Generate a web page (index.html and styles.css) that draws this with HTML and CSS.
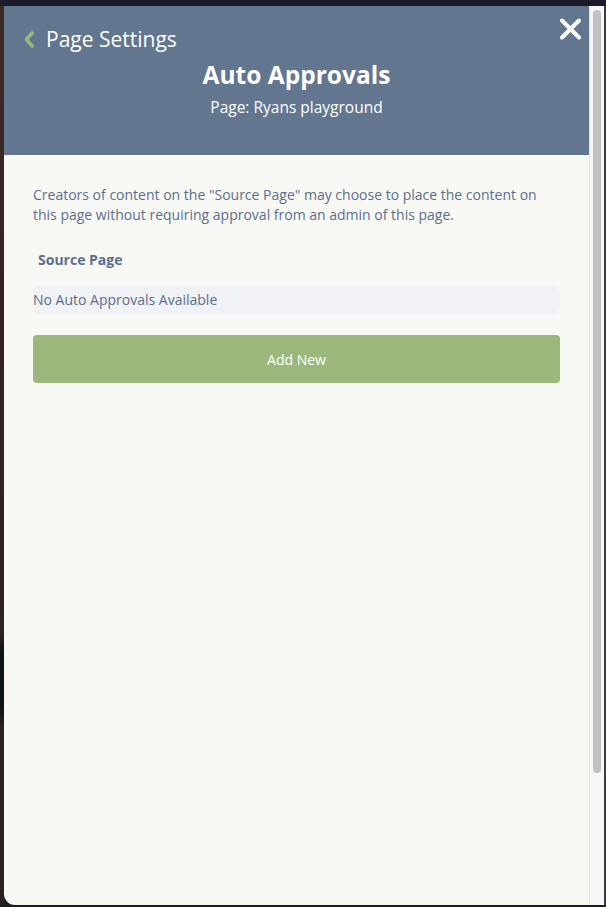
FILE: index.html
```html
<!DOCTYPE html>
<html lang="en">
<head>
<meta charset="utf-8">
<title>Auto Approvals</title>
<link rel="stylesheet" href="styles.css">
</head>
<body>
<div class="screen">
  <div class="topbar"></div>
  <div class="main">
    <div class="left-edge"></div>
    <div class="panel">
      <div class="panel-content">
        <header class="header">
          <a class="back" href="#">
            <svg class="chevron" width="11" height="17" viewBox="0 0 11 17" aria-hidden="true">
              <path d="M8.2 2 L2.4 8.5 L8.2 15" fill="none" stroke="#9bb87b" stroke-width="3.6" stroke-linecap="round" stroke-linejoin="round"/>
            </svg>
            <span>Page Settings</span>
          </a>
          <h1 class="title">Auto Approvals</h1>
          <p class="subtitle">Page: Ryans playground</p>
          <button class="close" aria-label="Close">
            <svg width="23" height="22" viewBox="0 0 23 22" aria-hidden="true">
              <path d="M3 2.5 L20 19.5 M20 2.5 L3 19.5" fill="none" stroke="#ffffff" stroke-width="4" stroke-linecap="round"/>
            </svg>
          </button>
        </header>
        <section class="body">
          <p class="desc">Creators of content on the "Source Page" may choose to place the content on this page without requiring approval from an admin of this page.</p>
          <div class="label">Source Page</div>
          <div class="empty-row">No Auto Approvals Available</div>
          <button class="add-btn">Add New</button>
        </section>
      </div>
      <div class="scrolltrack">
        <div class="scrollthumb"></div>
      </div>
    </div>
    <div class="right-edge"></div>
  </div>
  <div class="bottombar"></div>
</div>
</body>
</html>
```
FILE: styles.css
```css
* { box-sizing: border-box; }
html, body {
  margin: 0;
  padding: 0;
  height: 100%;
  background: #1b1b28;
  font-family: "Open Sans", "Noto Sans", sans-serif;
}
.screen {
  width: 606px;
  height: 907px;
  display: flex;
  flex-direction: column;
  background: #1b1b28;
}
.topbar {
  height: 6px;
  background: #1b1b2a;
  flex: none;
}
.main {
  flex: 1;
  display: flex;
  min-height: 0;
}
.left-edge {
  width: 4px;
  flex: none;
  background: linear-gradient(#3a2a24 0%, #2c221f 70%, #0d1416 72%, #0d1416 78%, #2c221f 80%, #2c221f 100%);
}
.right-edge {
  width: 2px;
  flex: none;
  background: #3c3c44;
}
.bottombar {
  height: 2px;
  flex: none;
  background: #1b1b22;
}
.panel {
  flex: 1;
  display: flex;
  background: #f8f9f5;
  border-bottom-left-radius: 11px;
  overflow: hidden;
}
.panel-content {
  flex: 1;
  display: flex;
  flex-direction: column;
}
.header {
  position: relative;
  height: 149px;
  background: #62768f;
  padding-top: 19px;
  color: #ffffff;
}
.back {
  display: flex;
  align-items: center;
  height: 28px;
  padding-left: 20px;
  gap: 11px;
  color: #ffffff;
  text-decoration: none;
  font-size: 21px;
  line-height: 28px;
}
.chevron { display: block; }
.title {
  margin: 7px 0 0;
  text-align: center;
  font-size: 24.5px;
  font-weight: 700;
  line-height: 30px;
}
.subtitle {
  margin: 7px 0 0;
  text-align: center;
  font-size: 15.5px;
  line-height: 20px;
}
.close {
  position: absolute;
  top: 12px;
  right: 7px;
  width: 23px;
  height: 22px;
  padding: 0;
  border: 0;
  background: none;
  cursor: pointer;
}
.close svg { display: block; }
.body {
  padding: 30px 29px 0;
  color: #5b6f8c;
  font-size: 14px;
}
.desc {
  margin: 0;
  line-height: 20px;
}
.label {
  margin-top: 25px;
  padding-left: 5px;
  font-weight: 700;
  line-height: 20px;
}
.empty-row {
  margin-top: 15px;
  height: 30px;
  line-height: 30px;
  background: #f0f2f6;
  border-radius: 8px;
  padding-left: 0;
}
.add-btn {
  display: block;
  width: 100%;
  margin-top: 20px;
  height: 48px;
  border: 0;
  border-radius: 4px;
  background: #9bb77b;
  color: #ffffff;
  font-family: "Open Sans", "Noto Sans", sans-serif;
  font-size: 14px;
  cursor: pointer;
}
.scrolltrack {
  width: 15px;
  flex: none;
  background: #f7f7f7;
  border-left: 1px solid #e4e4e4;
  padding: 4px 3px 0 3px;
}
.scrollthumb {
  width: 8px;
  height: 763px;
  background: #c1c1c1;
  border-radius: 4px;
}
```
